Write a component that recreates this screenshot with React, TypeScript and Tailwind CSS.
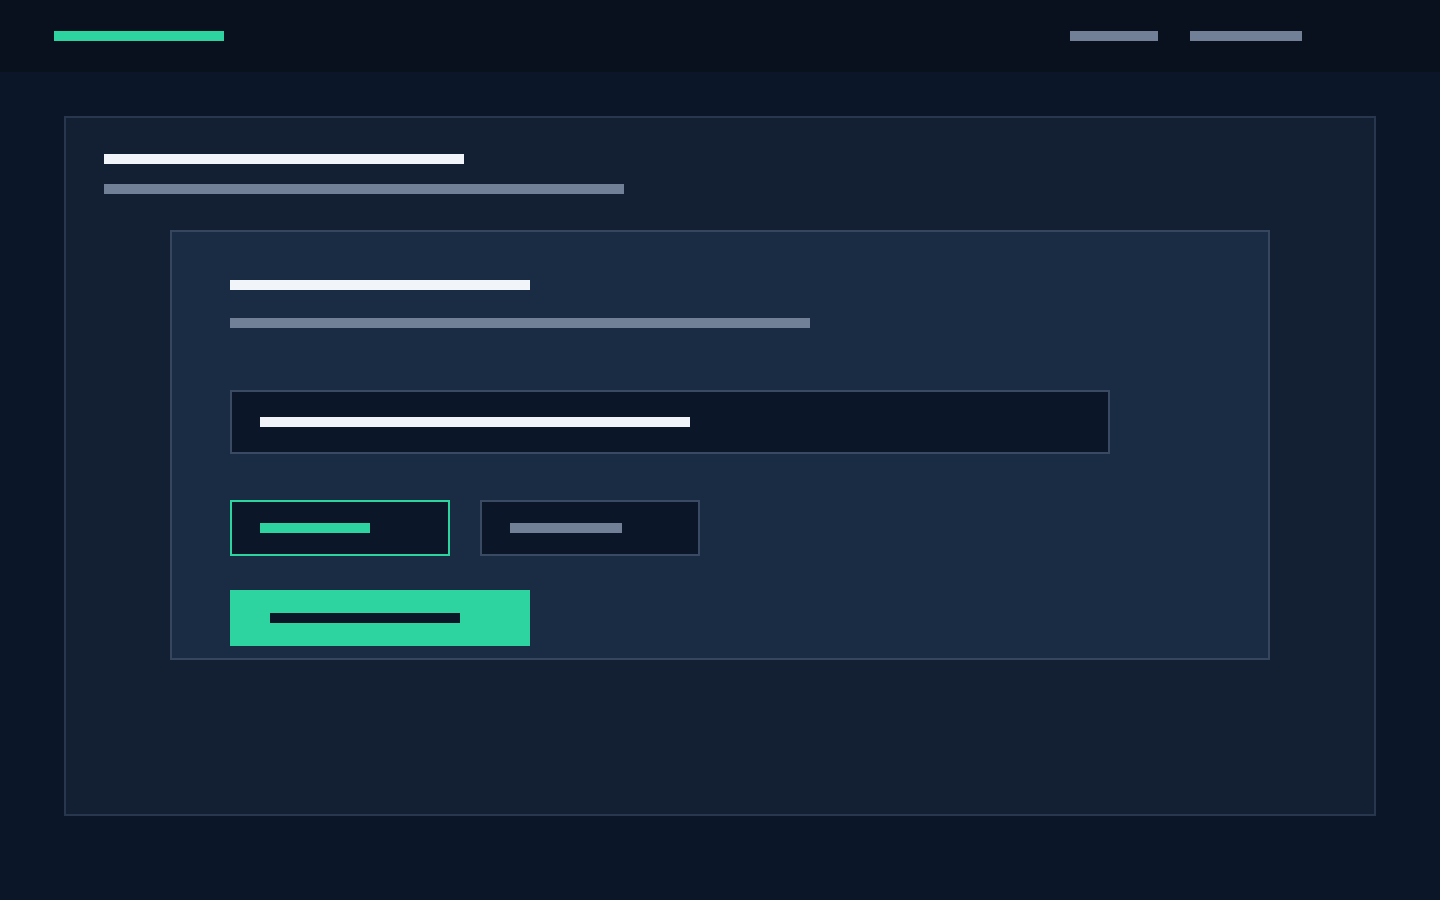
export default function App() {
  return (
    <div className="min-h-[900px] w-full bg-[#0b1628] font-['Inter',sans-serif]">
      <header className="flex h-[72px] items-center justify-between bg-[#08111d] pl-[54px] pr-[138px]">
        <div className="h-[10px] w-[170px] bg-[#2dd4a0]" />
        <nav className="flex items-center gap-[32px]">
          <div className="h-[10px] w-[88px] bg-[#718096]" />
          <div className="h-[10px] w-[112px] bg-[#718096]" />
        </nav>
      </header>
      <main className="px-[64px] pt-[44px]">
        <section className="flex h-[700px] flex-col border-2 border-[#28374d] bg-[#131f33] px-[38px] pt-[36px]">
          <div className="h-[10px] w-[360px] bg-[#f1f5f9]" />
          <div className="mt-[20px] h-[10px] w-[520px] bg-[#718096]" />
          <div className="mx-auto mt-[36px] flex w-[1100px] flex-col border-2 border-[#36465e] bg-[#1a2b44] pb-[12px] pl-[58px] pt-[48px]">
            <div className="h-[10px] w-[300px] bg-[#f1f5f9]" />
            <div className="mt-[28px] h-[10px] w-[580px] bg-[#718096]" />
            <div className="mt-[62px] flex h-[64px] w-[880px] items-center border-2 border-[#3a4a62] bg-[#0b1628] pl-[28px]">
              <div className="h-[10px] w-[430px] bg-[#f1f5f9]" />
            </div>
            <div className="mt-[46px] flex gap-[30px]">
              <div className="flex h-[56px] w-[220px] items-center border-2 border-[#2dd4a0] bg-[#0b1628] pl-[28px]">
                <div className="h-[10px] w-[110px] bg-[#2dd4a0]" />
              </div>
              <div className="flex h-[56px] w-[220px] items-center border-2 border-[#3a4a62] bg-[#0b1628] pl-[28px]">
                <div className="h-[10px] w-[112px] bg-[#718096]" />
              </div>
            </div>
            <div className="mt-[34px] flex h-[56px] w-[300px] items-center bg-[#2dd4a0] pl-[40px]">
              <div className="h-[10px] w-[190px] bg-[#0b1628]" />
            </div>
          </div>
        </section>
      </main>
    </div>
  );
}
